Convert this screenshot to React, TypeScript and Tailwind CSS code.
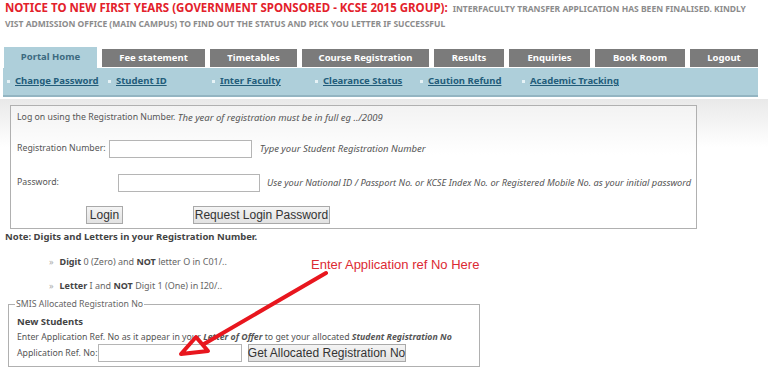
import React from "react";

const F = { fontFamily: "'Noto Sans', 'DejaVu Sans', sans-serif" };
const A = { fontFamily: "'Liberation Sans', Arial, sans-serif" };

const tabs = [
  { label: "Fee statement", w: "w-[103px]" },
  { label: "Timetables", w: "w-[87px]" },
  { label: "Course Registration", w: "w-[127px]" },
  { label: "Results", w: "w-[70px]" },
  { label: "Enquiries", w: "w-[81px]" },
  { label: "Book Room", w: "w-[90px]" },
  { label: "Logout", w: "w-[68px]" },
];

const links = [
  { label: "Change Password", w: "w-[101px]" },
  { label: "Student ID", w: "w-[104px]" },
  { label: "Inter Faculty", w: "w-[103px]" },
  { label: "Clearance Status", w: "w-[105px]" },
  { label: "Caution Refund", w: "w-[102px]" },
  { label: "Academic Tracking", w: "w-[110px]" },
];

export default function App() {
  return (
    <div className="relative w-[768px] h-[370px] overflow-hidden bg-white text-[#555]" style={F}>
      {/* Notice */}
      <div className="px-[5px] pt-[0px] whitespace-nowrap">
        <div className="h-[16px] flex items-baseline gap-[5px]">
          <span className="text-[11.5px] leading-[16px] font-bold text-[#e3212b]">
            NOTICE TO NEW FIRST YEARS (GOVERNMENT SPONSORED - KCSE 2015 GROUP):
          </span>
          <span className="text-[8.5px] leading-[16px] font-bold text-[#8c8c8c]">
            INTERFACULTY TRANSFER APPLICATION HAS BEEN FINALISED. KINDLY
          </span>
        </div>
        <div className="h-[16px] text-[8.5px] leading-[16px] font-bold text-[#8c8c8c]">
          VIST ADMISSION OFFICE (MAIN CAMPUS) TO FIND OUT THE STATUS AND PICK YOU LETTER IF SUCCESSFUL
        </div>
      </div>

      {/* Tabs */}
      <div className="mt-[15px] ml-[4px] flex items-end gap-[5px] h-[21px] whitespace-nowrap">
        <div className="w-[93px] h-[21px] bg-[#aecfda] flex items-center justify-center text-[9.5px] font-bold text-[#3d6a80]">
          Portal Home
        </div>
        {tabs.map((t) => (
          <div
            key={t.label}
            className={`${t.w} h-[18px] mb-[1px] bg-[#7b7b7b] flex items-center justify-center text-[9.5px] font-bold text-white`}
          >
            {t.label}
          </div>
        ))}
      </div>
      {/* Subnav */}
      <div className="ml-[3px] w-[755px] h-[29px] bg-[#aecfda] border-b-[2px] border-[#93b5c2] flex items-center pl-[4px] whitespace-nowrap">
        {links.map((l) => (
          <div key={l.label} className={`${l.w} flex items-center shrink-0`}>
            <span className="w-[3px] h-[3px] bg-[#e6f2f6] mr-[5px]" />
            <span className="text-[9.5px] font-bold text-[#235d7a] underline">{l.label}</span>
          </div>
        ))}
      </div>

      {/* Login area */}
      <div className="mt-[2px] bg-gradient-to-b from-[#e9e9e9] to-white h-[48px] -mb-[42px]" />
      <div className="relative mx-[10px] w-[687px] h-[124px] border border-[#b0b0b0] bg-gradient-to-b from-[#f3f3f3] to-white to-[40%] text-[8.75px] text-[#555] whitespace-nowrap">
        <div className="pl-[6px] pt-[4px] h-[20px] flex items-center">
          <span>Log on using the Registration Number.&nbsp;</span>
          <i className="text-[9.5px]">The year of registration must be in full eg ../2009</i>
        </div>
        <div className="pl-[6px] mt-[14px] flex items-center h-[18px]">
          <span className="shrink-0">Registration Number:</span>
          <span className="shrink-0 ml-[3px] w-[143px] h-[18px] border border-[#b5b5b5] bg-white" />
          <i className="ml-[8px] text-[9.5px]">Type your Student Registration Number</i>
        </div>
        <div className="pl-[6px] mt-[16px] flex items-center h-[18px]">
          <span className="shrink-0 w-[101px]">Password:</span>
          <span className="shrink-0 w-[142px] h-[18px] border border-[#b5b5b5] bg-white" />
          <i className="ml-[7px] text-[9.25px]">Use your National ID / Passport No. or KCSE Index No. or Registered Mobile No. as your initial password</i>
        </div>
        <div className="mt-[14px] flex items-center h-[18px]">
          <span className="ml-[75px] w-[37px] h-[18px] border border-[#a9a9a9] bg-gradient-to-b from-[#f4f4f4] to-[#e2e2e2] flex items-center justify-center text-[12px] text-[#333]" style={A}>
            Login
          </span>
          <span className="ml-[70px] w-[137px] h-[18px] border border-[#a9a9a9] bg-gradient-to-b from-[#f4f4f4] to-[#e2e2e2] flex items-center justify-center text-[12px] text-[#333]" style={A}>
            Request Login Password
          </span>
        </div>
      </div>

      {/* Note */}
      <div className="pl-[5px] h-[16px] leading-[16px] text-[9.5px] font-bold text-[#444] whitespace-nowrap">
        Note: Digits and Letters in your Registration Number.
      </div>
      <div className="pl-[49px] mt-[10px] h-[14px] text-[9px] text-[#666] flex items-center whitespace-nowrap">
        <span className="text-[#aaa] mr-[6px]">»</span>
        <b className="text-[#444]">Digit</b>&nbsp;0 (Zero) and&nbsp;<b className="text-[#444]">NOT</b>&nbsp;letter O in C01/..
      </div>
      <div className="pl-[49px] mt-[10px] h-[14px] text-[9px] text-[#666] flex items-center whitespace-nowrap">
        <span className="text-[#aaa] mr-[6px]">»</span>
        <b className="text-[#444]">Letter</b>&nbsp;I and&nbsp;<b className="text-[#444]">NOT</b>&nbsp;Digit 1 (One) in I20/..
      </div>

      {/* Fieldset */}
      <fieldset className="mx-[8px] mt-[4px] w-[472px] h-[70px] border border-[#b0b0b0] pl-[8px] pr-[4px] text-[8.75px] text-[#555] whitespace-nowrap leading-[14px]">
        <legend className="px-[1px] -ml-[2px] text-[8.75px] leading-[14px] text-[#666]">SMIS Allocated Registration No</legend>
        <div className="font-bold text-[#444] text-[9.5px] mt-[4px]">New Students</div>
        <div className="mt-[1px]">
          Enter Application Ref. No as it appear in your <b><i>Letter of Offer</i></b> to get your allocated{" "}
          <b><i>Student Registration No</i></b>
        </div>
        <div className="flex items-center h-[18px]">
          <span className="shrink-0">Application Ref. No:</span>
          <span className="shrink-0 w-[144px] h-[18px] border border-[#b5b5b5] bg-white" />
          <span className="shrink-0 ml-[6px] w-[158px] h-[18px] border border-[#a9a9a9] bg-gradient-to-b from-[#f4f4f4] to-[#e2e2e2] flex items-center justify-center text-[12px] text-[#333]" style={A}>
            Get Allocated Registration No
          </span>
        </div>
      </fieldset>

      {/* Annotation */}
      <div className="absolute left-[311px] top-[255px] text-[13px] text-[#dc2a33] whitespace-nowrap" style={A}>
        Enter Application ref No Here
      </div>
      <svg className="absolute left-0 top-0" width="768" height="370" viewBox="0 0 768 370">
        <line x1="326" y1="273" x2="204" y2="344" stroke="#e8161e" strokeWidth="4" strokeLinecap="round" />
        <polygon points="181,354 196,337 208,351" fill="none" stroke="#e8161e" strokeWidth="4" strokeLinejoin="round" />
      </svg>
    </div>
  );
}
